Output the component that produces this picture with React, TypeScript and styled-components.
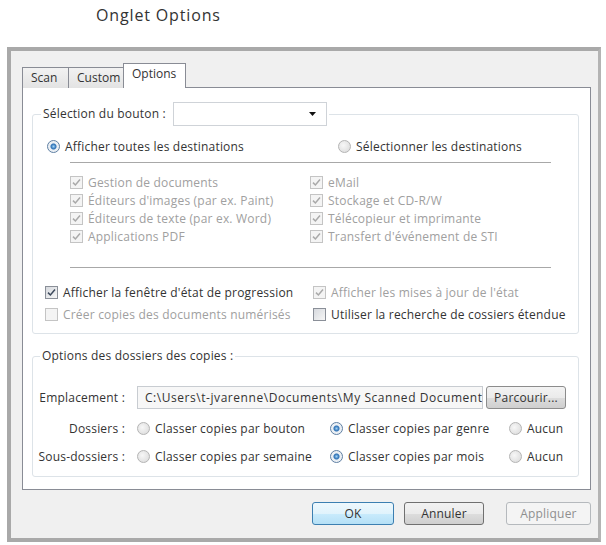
import React from "react";
import styled, { createGlobalStyle, css } from "styled-components";

const GlobalStyle = createGlobalStyle`
  body {
    margin: 0;
    background: #fff;
    font-family: "Open Sans", "Liberation Sans", sans-serif;
    font-size: 12px;
    letter-spacing: 0.2px;
    color: #333;
  }
`;

const Heading = styled.h2`
  margin: 0;
  height: 47px;
  box-sizing: border-box;
  padding: 5px 0 0 96px;
  font-size: 16px;
  letter-spacing: 0.85px;
  line-height: 20px;
  font-weight: 400;
  color: #333;
`;

const Frame = styled.div`
  margin-left: 7px;
  width: 594px;
  height: 495px;
  box-sizing: border-box;
  border: 4px solid #a9a9a9;
  border-right-width: 3px;
  border-right-color: #b4b4b4;
  background: #f0f0f0;
  padding: 13px 7px 13px 11px;
  display: flex;
  flex-direction: column;
`;

const TabStrip = styled.div`
  display: flex;
  align-items: flex-end;
  height: 24px;
  margin-bottom: -1px;
  position: relative;
  z-index: 1;
`;

const Tab = styled.div<{ $active?: boolean; $w: number }>`
  width: ${(p) => p.$w}px;
  box-sizing: border-box;
  border: 1px solid #898c95;
  border-bottom: none;
  margin-left: -1px;
  &:first-child {
    margin-left: 0;
  }
  padding-left: 8px;
  letter-spacing: 0;
  color: #333;
  ${(p) =>
    p.$active
      ? css`
          height: 25px;
          line-height: 20px;
          background: #fff;
          margin-right: -1px;
        `
      : css`
          height: 21px;
          line-height: 20px;
          background: linear-gradient(#f2f2f2, #e3e3e3);
        `}
`;

const Panel = styled.div`
  flex: 1;
  background: #fff;
  border: 1px solid #898c95;
  padding: 0 11px 0 9px;
`;

const Group = styled.fieldset<{ $pad: string }>`
  margin: 14px 0 0;
  padding: ${(p) => p.$pad};
  border: 1px solid #dde3e8;
  border-radius: 3px;
  min-width: 0;
`;

const Legend = styled.legend<{ $offset: number }>`
  margin-left: ${(p) => p.$offset}px;
  padding: 0 2px;
  display: flex;
  align-items: center;
  gap: 7px;
  line-height: 16px;
  color: #333;
`;

const Combo = styled.div`
  width: 154px;
  height: 24px;
  box-sizing: border-box;
  border: 1px solid #cfd3d8;
  background: #fff;
  display: flex;
  align-items: center;
  justify-content: flex-end;
  padding-right: 10px;
`;

const TwoCols = styled.div<{ $col: number; $indent: number; $top: number; $gap?: number }>`
  display: grid;
  grid-template-columns: ${(p) => p.$col}px auto;
  row-gap: ${(p) => p.$gap ?? 0}px;
  margin: ${(p) => p.$top}px 0 0 ${(p) => p.$indent}px;
`;

const Separator = styled.div<{ $top: number }>`
  height: 1px;
  background: #a8a8a8;
  margin: ${(p) => p.$top}px 27px 0 37px;
`;

const Item = styled.label<{ $disabled?: boolean }>`
  display: flex;
  align-items: center;
  gap: 5px;
  height: 18px;
  white-space: nowrap;
  color: ${(p) => (p.$disabled ? "#a0a0a0" : "#333")};
`;

const Box = styled.span<{ $disabled?: boolean }>`
  width: 13px;
  height: 13px;
  box-sizing: border-box;
  flex: none;
  display: flex;
  align-items: center;
  justify-content: center;
  border: 1px solid ${(p) => (p.$disabled ? "#c4c4c4" : "#8a8f98")};
  background: ${(p) =>
    p.$disabled ? "#f4f4f4" : "linear-gradient(135deg, #d6d9de, #f6f6f6)"};
`;

const Dot = styled.span<{ $on?: boolean }>`
  width: 13px;
  height: 13px;
  box-sizing: border-box;
  flex: none;
  border-radius: 50%;
  border: 1px solid ${(p) => (p.$on ? "#5e7fa3" : "#b4b4b4")};
  background: ${(p) =>
    p.$on
      ? "radial-gradient(circle at 50% 50%, #9fd1f5 0, #2b6fb4 2.5px, #e8eef4 3.5px, #f4f4f4 100%)"
      : "radial-gradient(circle at 40% 40%, #f7f7f7, #d8d8d8)"};
`;

const FolderGrid = styled.div`
  display: grid;
  grid-template-columns: 89px 1fr;
  column-gap: 12px;
  row-gap: 10px;
  margin-top: 22px;
  align-items: center;
`;

const FieldLabel = styled.span`
  text-align: right;
  white-space: nowrap;
  color: #333;
`;

const PathRow = styled.div`
  display: flex;
  gap: 3px;
  height: 23px;
`;

const PathField = styled.div`
  width: 346px;
  box-sizing: border-box;
  border: 1px solid #c8ccd1;
  background: #f7f7f7;
  padding: 0 7px;
  line-height: 21px;
  letter-spacing: 0.55px;
  white-space: nowrap;
  overflow: hidden;
  color: #333;
`;

const SmallButton = styled.div`
  width: 80px;
  box-sizing: border-box;
  border: 1px solid #8c8c8c;
  border-radius: 3px;
  background: linear-gradient(#f3f3f3 0%, #ebebeb 50%, #dddddd 51%, #cfcfcf 100%);
  text-align: center;
  line-height: 21px;
  color: #333;
`;

const RadioSet = styled.div`
  display: grid;
  grid-template-columns: 193px 179px auto;
`;

const ButtonBar = styled.div`
  display: flex;
  justify-content: flex-end;
  margin-top: 12px;
  height: 23px;
`;

const DialogButton = styled.div<{ $w: number; $ml: number; $kind?: "default" | "disabled" }>`
  width: ${(p) => p.$w}px;
  margin-left: ${(p) => p.$ml}px;
  box-sizing: border-box;
  border-radius: 3px;
  text-align: center;
  line-height: 21px;
  ${(p) =>
    p.$kind === "default"
      ? css`
          border: 1px solid #3c7fb1;
          background: linear-gradient(#eef8fd 0%, #e0f3fc 50%, #c9ebfc 51%, #b5e0f6 100%);
          color: #333;
        `
      : p.$kind === "disabled"
      ? css`
          border: 1px solid #b5b9bd;
          background: #f4f4f4;
          color: #8f8f8f;
        `
      : css`
          border: 1px solid #707070;
          background: linear-gradient(#f2f2f2 0%, #ebebeb 50%, #dddddd 51%, #cfcfcf 100%);
          color: #333;
        `}
`;

function Check({ checked, disabled, children }: { checked?: boolean; disabled?: boolean; children: React.ReactNode }) {
  return (
    <Item $disabled={disabled}>
      <Box $disabled={disabled}>
        {checked && (
          <svg width="9" height="9" viewBox="0 0 9 9">
            <path
              d="M1 4.6 L3.4 7 L8 1.6"
              fill="none"
              stroke={disabled ? "#a9a9a9" : "#3d4a5c"}
              strokeWidth="1.5"
            />
          </svg>
        )}
      </Box>
      {children}
    </Item>
  );
}

function Radio({ on, children }: { on?: boolean; children: React.ReactNode }) {
  return (
    <Item>
      <Dot $on={on} />
      {children}
    </Item>
  );
}

export default function App() {
  return (
    <>
      <GlobalStyle />
      <Heading>Onglet Options</Heading>
      <Frame>
        <TabStrip>
          <Tab $w={47}>Scan</Tab>
          <Tab $w={56}>Custom</Tab>
          <Tab $w={63} $active>
            Options
          </Tab>
        </TabStrip>
        <Panel>
          <Group $pad="0 0 10px 0">
            <Legend $offset={8}>
              <span>Sélection du bouton :</span>
              <Combo>
                <svg width="7" height="4" viewBox="0 0 7 4">
                  <polygon points="0,0 7,0 3.5,4" fill="#111" />
                </svg>
              </Combo>
            </Legend>
            <TwoCols $col={291} $indent={14} $top={11}>
              <Radio on>Afficher toutes les destinations</Radio>
              <Radio>Sélectionner les destinations</Radio>
            </TwoCols>
            <Separator $top={7} />
            <TwoCols $col={240} $indent={37} $top={10}>
              <Check checked disabled>Gestion de documents</Check>
              <Check checked disabled>eMail</Check>
              <Check checked disabled>Éditeurs d'images (par ex. Paint)</Check>
              <Check checked disabled>Stockage et CD-R/W</Check>
              <Check checked disabled>Éditeurs de texte (par ex. Word)</Check>
              <Check checked disabled>Télécopieur et imprimante</Check>
              <Check checked disabled>Applications PDF</Check>
              <Check checked disabled>Transfert d'événement de STI</Check>
            </TwoCols>
            <Separator $top={22} />
            <TwoCols $col={268} $indent={12} $top={15} $gap={4}>
              <Check checked>Afficher la fenêtre d'état de progression</Check>
              <Check checked disabled>Afficher les mises à jour de l'état</Check>
              <Check disabled>Créer copies des documents numérisés</Check>
              <Check>Utiliser la recherche de cossiers étendue</Check>
            </TwoCols>
          </Group>
          <Group $pad="0 11px 11px 3px">
            <Legend $offset={4}>Options des dossiers des copies :</Legend>
            <FolderGrid>
              <FieldLabel>Emplacement :</FieldLabel>
              <PathRow>
                <PathField>{"C:\\Users\\t-jvarenne\\Documents\\My Scanned Documents"}</PathField>
                <SmallButton>Parcourir...</SmallButton>
              </PathRow>
              <FieldLabel>Dossiers :</FieldLabel>
              <RadioSet>
                <Radio>Classer copies par bouton</Radio>
                <Radio on>Classer copies par genre</Radio>
                <Radio>Aucun</Radio>
              </RadioSet>
              <FieldLabel>Sous-dossiers :</FieldLabel>
              <RadioSet>
                <Radio>Classer copies par semaine</Radio>
                <Radio on>Classer copies par mois</Radio>
                <Radio>Aucun</Radio>
              </RadioSet>
            </FolderGrid>
          </Group>
        </Panel>
        <ButtonBar>
          <DialogButton $w={82} $ml={0} $kind="default">
            OK
          </DialogButton>
          <DialogButton $w={80} $ml={10}>
            Annuler
          </DialogButton>
          <DialogButton $w={85} $ml={22} $kind="disabled">
            Appliquer
          </DialogButton>
        </ButtonBar>
      </Frame>
    </>
  );
}
